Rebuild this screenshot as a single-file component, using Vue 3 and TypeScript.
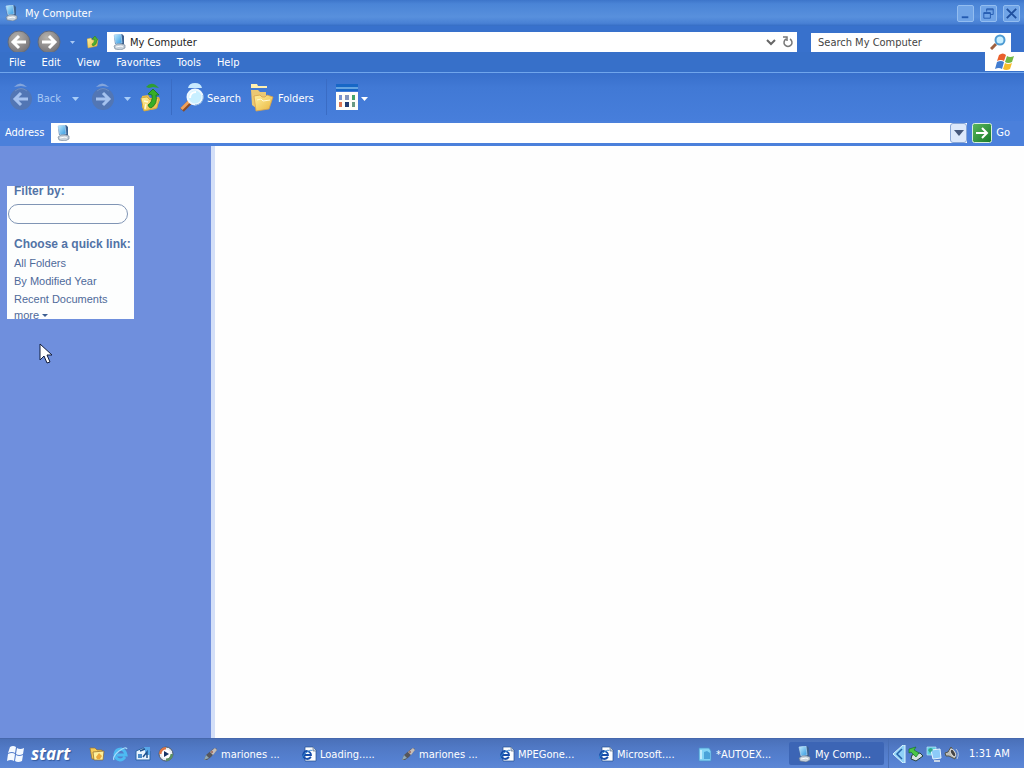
<script setup lang="ts">
import { ref } from 'vue'

interface Task {
  icon: string
  label: string
  active?: boolean
}

const menus: string[] = ['File', 'Edit', 'View', 'Favorites', 'Tools', 'Help']
const quickLinks: string[] = ['All Folders', 'By Modified Year', 'Recent Documents']
const launchers: { icon: string; label: string }[] = [
  { icon: 'i-folder', label: 'Folders' },
  { icon: 'i-ie', label: 'Internet Explorer' },
  { icon: 'i-mail', label: 'Mail' },
  { icon: 'i-media', label: 'Media player' },
]
const tasks: Task[] = [
  { icon: 'i-brush', label: 'mariones ...' },
  { icon: 'i-page', label: 'Loading.....' },
  { icon: 'i-brush', label: 'mariones ...' },
  { icon: 'i-page', label: 'MPEGone...' },
  { icon: 'i-page', label: 'Microsoft....' },
  { icon: 'i-note', label: '*AUTOEX...' },
  { icon: 'i-pc', label: 'My Comp...', active: true },
]
const location = ref('My Computer')
const search = ref('')
const address = ref('')
const filter = ref('')
</script>

<template>
  <div class="screen">
    <svg class="defs" aria-hidden="true">
      <defs>
        <linearGradient id="g-screen" x1="0" y1="0" x2="1" y2="1">
          <stop offset="0" stop-color="#c6eeff" /><stop offset="1" stop-color="#2f97e0" />
        </linearGradient>
        <radialGradient id="g-round" cx=".4" cy=".3" r=".7">
          <stop offset="0" stop-color="#b5b2ac" /><stop offset="1" stop-color="#77757a" />
        </radialGradient>
        <linearGradient id="g-go" x1="0" y1="0" x2="1" y2="1">
          <stop offset="0" stop-color="#5cb85c" /><stop offset="1" stop-color="#167a28" />
        </linearGradient>
        <linearGradient id="g-yellow" x1="0" y1="0" x2="1" y2="1">
          <stop offset="0" stop-color="#fff2a0" /><stop offset="1" stop-color="#e9b53c" />
        </linearGradient>
        <symbol id="i-pc" viewBox="0 0 16 16">
          <path d="M3 1l8-1 2 2v8l-3 1-6-1z" fill="#3c6190" />
          <path d="M3 1l7-1 1 9-6 1z" fill="url(#g-screen)" stroke="#b5d9f7" stroke-width=".7" />
          <path d="M3 12l3-2h5l3 1v3l-4 2-6-1z" fill="#c6d0da" stroke="#66788e" stroke-width=".6" />
          <path d="M5 13l5-1 2 1" fill="none" stroke="#fff" />
        </symbol>
        <symbol id="i-round-left" viewBox="0 0 24 24">
          <circle cx="12" cy="12" r="11" fill="url(#g-round)" stroke="#5f6b80" />
          <path d="M19 12H6M12 6l-6 6 6 6" fill="none" stroke="#fff" stroke-width="3" />
        </symbol>
        <symbol id="i-round-right" viewBox="0 0 24 24">
          <circle cx="12" cy="12" r="11" fill="url(#g-round)" stroke="#5f6b80" />
          <path d="M5 12h13M12 6l6 6-6 6" fill="none" stroke="#fff" stroke-width="3" />
        </symbol>
        <symbol id="i-dim-left" viewBox="0 0 24 30">
          <path d="M5 5q6-7 13 0l-6-1z" fill="#83a5dc" />
          <circle cx="12" cy="17" r="11" fill="#5276b4" />
          <path d="M6 9q6-5 12 0" fill="none" stroke="#6a8dc4" />
          <path d="M19 17H7M12 11l-6 6 6 6" fill="none" stroke="#a5c2ef" stroke-width="3" />
        </symbol>
        <symbol id="i-dim-right" viewBox="0 0 24 30">
          <path d="M5 5q6-7 13 0l-6-1z" fill="#83a5dc" />
          <circle cx="12" cy="17" r="11" fill="#5276b4" />
          <path d="M6 9q6-5 12 0" fill="none" stroke="#6a8dc4" />
          <path d="M5 17h12M12 11l6 6-6 6" fill="none" stroke="#a5c2ef" stroke-width="3" />
        </symbol>
        <symbol id="i-up" viewBox="0 0 22 30">
          <path d="M6 5q6-7 13 1l-6-1-4 1z" fill="#2f9e33" />
          <path d="M2 14l6-1 2 3 9-1 1 3-4 9-12 2-2-4z" fill="#e9bd48" />
          <path d="M1 16l6-1 3 3 9-2-2 10-13 3z" fill="url(#g-yellow)" stroke="#cfa135" stroke-width=".8" />
          <path d="M4 19l4 1M5 27l1-5" fill="none" stroke="#fffbd8" stroke-width="1.500" />
          <path d="M8 12l5-5 6 6h-3q2 9-5 13-2 0-3-3 5-3 4-10z" fill="#37ae26" stroke="#16731d" stroke-width=".8" />
        </symbol>
        <symbol id="i-up-small" viewBox="0 0 12 14">
          <path d="M0 4l4-1 1 2 6-1-1 7-9 2z" fill="url(#g-yellow)" stroke="#d0a536" stroke-width=".5" />
          <path d="M5 4l3-3 3 4H10q0 5-4 6-1-1-1-2 3-1 2-5z" fill="#4db02f" stroke="#287d22" stroke-width=".5" />
        </symbol>
        <symbol id="i-search-big" viewBox="0 0 24 30">
          <path d="M8 6q1-5 7-5t7 5z" fill="#c9eaff" />
          <path d="M2 28l8-8" stroke="#884c29" stroke-width="5" />
          <path d="M1.500 27l8-8" stroke="#f0a25a" stroke-width="3" />
          <circle cx="15" cy="15" r="7.500" fill="#c8efff" stroke="#eef8ff" stroke-width="2" />
          <path d="M10 16q0-6 6-6" fill="none" stroke="#fff" stroke-width="2" />
          <path d="M23 13a8 8 0 0 1-8 10" fill="none" stroke="#80aedc" />
        </symbol>
        <symbol id="i-folders-big" viewBox="0 0 24 30">
          <path d="M1 2h6l1 2h9v2H1z" fill="#fff0b0" />
          <path d="M1 8h7l2 2h6v5L6 26l-4-3z" fill="#eac873" />
          <path d="M4 14l6-1 2 2h3l2-2 6 2-4 12-13 2z" fill="url(#g-yellow)" stroke="#d9a14a" stroke-width=".8" />
          <path d="M7 18l4-1 2 2 7-1" fill="none" stroke="#fff8d5" />
        </symbol>
        <symbol id="i-views" viewBox="0 0 22 26">
          <path d="M0 0h22v7H0z" fill="#1767c6" /><path d="M0 4h22" stroke="#b5e2fb" />
          <path d="M0 8h22v18H0z" fill="#fffef8" />
          <path d="M3 11h3v5H3z" fill="#7793d0" /><path d="M9 11h4v5H9z" fill="#8295bd" /><path d="M16 11h3v5h-3z" fill="#43a56b" />
          <path d="M3 18h3v5H3z" fill="#dd7652" /><path d="M9 18h4v5H9z" fill="#233d70" /><path d="M16 18h3v5h-3z" fill="#6b9b83" />
        </symbol>
        <symbol id="i-glass" viewBox="0 0 16 16">
          <path d="M1 15l5-5" stroke="#9d5f3f" stroke-width="3" />
          <circle cx="10" cy="6" r="4.500" fill="#c8efff" stroke="#4e9bd3" stroke-width="2" />
        </symbol>
        <symbol id="i-flag" viewBox="0 0 20 18">
          <path d="M4 2q4-3 7 0L9 8Q6 6 2 8z" fill="#e9602c" />
          <path d="M12 3q3 2 7 0l-2 6q-4 2-7 0z" fill="#74b843" />
          <path d="M2 9q4-2 7 0l-2 7q-3-2-7 0z" fill="#427dd0" />
          <path d="M10 10q3 2 7 0l-2 6q-4 2-7 0z" fill="#f6bd2c" />
        </symbol>
        <symbol id="i-flag-white" viewBox="0 0 18 18">
          <path d="M3 2q3-2 6 0L8 8Q5 6 1 8zM10 3q3 2 7 0l-1 6q-4 2-7 0zM1 9q4-2 7 0l-1 7q-3-2-7 0zM9 10q3 2 7 0l-1 6q-4 2-7 0z" fill="#f4f9ff" />
        </symbol>
        <symbol id="i-go" viewBox="0 0 20 20">
          <rect x=".5" y=".5" width="19" height="19" rx="2" fill="url(#g-go)" stroke="#d9f0dd" />
          <path d="M4 10h11M10 5l5 5-5 5" fill="none" stroke="#fff" stroke-width="2" />
        </symbol>
        <symbol id="i-folder" viewBox="0 0 16 16">
          <path d="M1 2h5l2 2h5v9H3z" fill="#f7cc59" stroke="#99722e" stroke-width=".7" />
          <path d="M4 6l11-1-1 9H5z" fill="#fff09a" stroke="#8c6726" stroke-width=".7" />
          <path d="M7 11l3-4 3 3-2 3H8z" fill="#eba93c" />
        </symbol>
        <symbol id="i-ie" viewBox="0 0 16 16">
          <path d="M13 11q-2 3-5 3-5-1-5-6 1-5 6-5 4 1 5 6H5" fill="none" stroke="#4dbaf2" stroke-width="3" />
          <path d="M2 14q-2-3 5-9 7-5 8-2" fill="none" stroke="#a5ddfc" stroke-width="1.200" />
        </symbol>
        <symbol id="i-mail" viewBox="0 0 16 16">
          <path d="M1 5l7-3 7 3v9H1z" fill="#e8f4ff" stroke="#2c65a5" />
          <path d="M3 8h4v4H3z" fill="#4b8bc8" />
          <path d="M9 1h6v8h-4z" fill="#57a7e8" /><path d="M5 5l5-2M8 11l4-5v6" fill="none" stroke="#21548f" stroke-width="1.500" />
        </symbol>
        <symbol id="i-media" viewBox="0 0 16 16">
          <circle cx="8" cy="8" r="7" fill="#e8edf2" stroke="#4b5868" />
          <path d="M8 1a7 7 0 0 0-7 7h4a4 4 0 0 1 3-4z" fill="#dc7546" />
          <path d="M8 15a7 7 0 0 0 7-7h-3a4 4 0 0 1-4 4z" fill="#5a8f62" />
          <circle cx="8" cy="8" r="4.500" fill="#fff" /><path d="M6 5l5 3-5 3z" fill="#173464" />
        </symbol>
        <symbol id="i-brush" viewBox="0 0 16 16">
          <path d="M2 14l2-5 7-6 3-1 1 2-6 7-4 3z" fill="#55565c" />
          <path d="M8 6l3 3 4-5-2-2z" fill="#c5bdb8" />
          <path d="M2 14l2-5 3 3z" fill="#8fa8b4" /><circle cx="10" cy="6" r="1" fill="#9b635a" />
        </symbol>
        <symbol id="i-page" viewBox="0 0 16 16">
          <path d="M4 1h8l3 3v11H4z" fill="#fbfdff" stroke="#234e91" stroke-width=".7" />
          <path d="M12 1v4h3" fill="#c1cfdd" stroke="#50617e" stroke-width=".6" />
          <path d="M10 11q-2 2-4 2-4-1-4-4 1-4 4-4 4 1 4 4H3" fill="none" stroke="#174daa" stroke-width="1.800" />
          <path d="M1 13q0-4 5-7 5-3 5-1" fill="none" stroke="#3686d1" />
        </symbol>
        <symbol id="i-note" viewBox="0 0 16 16">
          <path d="M2 2h10l2 3v10H2z" fill="#83d4f5" stroke="#4a91ca" stroke-width=".8" />
          <path d="M7 6l3-1 3 2v6H7z" fill="#4aa3d9" /><path d="M4 4v9" stroke="#d4f4ff" stroke-width="1.500" />
        </symbol>
        <symbol id="i-chev" viewBox="0 0 14 18">
          <path d="M13 0v18h-2L1 9 11 0z" fill="#8fd1f7" stroke="#dcf7ff" />
          <path d="M10 4L5 9l5 5" fill="none" stroke="#2662a9" stroke-width="1.500" />
        </symbol>
        <symbol id="i-safe" viewBox="0 0 16 16">
          <path d="M4 9l8-2 3 3-7 5-5-2z" fill="#d6e3e0" stroke="#26433f" />
          <path d="M1 3l7-2-2 3 5 3-3 4-5-5-2 1z" fill="#4bc546" stroke="#19732b" stroke-width=".7" />
        </symbol>
        <symbol id="i-net" viewBox="0 0 16 16">
          <path d="M1 1h9v8H1z" fill="#5fcfe2" stroke="#c2e2f5" stroke-width=".7" />
          <path d="M5 4l9-1 1 9-8 1z" fill="#8ccaf8" stroke="#e4f4ff" />
          <path d="M8 15h6" stroke="#c7d5e7" stroke-width="2" /><path d="M2 4q3-4 5 0l-3 3z" fill="#35a68c" />
        </symbol>
        <symbol id="i-sound" viewBox="0 0 16 16">
          <path d="M1 7l3-1 3-5 5 7-1 5-6-3H2z" fill="#bcbdb8" stroke="#53564f" />
          <ellipse cx="9" cy="7" rx="2" ry="4" transform="rotate(-30 9 7)" fill="#444" stroke="#ddd" />
          <path d="M12 3q4 4 1 10" fill="none" stroke="#b5c8e0" />
        </symbol>
      </defs>
    </svg>

    <header class="titlebar">
      <svg class="s16"><use href="#i-pc" /></svg>
      <h1>My Computer</h1>
      <div class="winbtns">
        <button aria-label="Minimize"><svg viewBox="0 0 16 16"><path d="M4 11h7v2H4z" fill="#245bb0" /></svg></button>
        <button aria-label="Restore"><svg viewBox="0 0 16 16"><path d="M6 6V3h7v6h-3M3 7h7v6H3zM3 8h7M6 4h7" fill="none" stroke="#245bb0" /></svg></button>
        <button aria-label="Close"><svg viewBox="0 0 16 16"><path d="M3 3l10 10M13 3L3 13" fill="none" stroke="#1f4f9e" stroke-width="2" /></svg></button>
      </div>
    </header>

    <div class="navrow">
      <button aria-label="Previous"><svg class="s24"><use href="#i-round-left" /></svg></button>
      <button class="next" aria-label="Next"><svg class="s24"><use href="#i-round-right" /></svg></button>
      <button class="dot" aria-label="History"><svg viewBox="0 0 5 3"><path d="M0 0h5L2.500 3z" fill="#a9c9f4" /></svg></button>
      <button class="mini" aria-label="Parent folder"><svg><use href="#i-up-small" /></svg></button>
      <div class="field location">
        <svg class="s16"><use href="#i-pc" /></svg>
        <input v-model="location" type="text" aria-label="Location" />
        <button aria-label="Show locations"><svg class="s12" viewBox="0 0 12 12"><path d="M2 4l4 4 4-4" fill="none" stroke="#666" stroke-width="2" /></svg></button>
        <button class="reload" aria-label="Refresh"><svg class="s12" viewBox="0 0 12 12"><path d="M8 3a4 4 0 1 1-4 0M1 1h4v4" fill="none" stroke="#777" stroke-width="1.500" /></svg></button>
      </div>
      <div class="field searchbox">
        <input v-model="search" type="text" placeholder="Search My Computer" aria-label="Search My Computer" />
        <button aria-label="Search"><svg class="s16"><use href="#i-glass" /></svg></button>
      </div>
    </div>

    <nav class="menubar">
      <button v-for="m in menus" :key="m">{{ m }}</button>
      <span class="brand"><svg><use href="#i-flag" /></svg></span>
    </nav>

    <div class="toolbar">
      <button class="dim"><svg class="big"><use href="#i-dim-left" /></svg><span>Back</span></button>
      <button class="drop wide" aria-label="Back history"><svg viewBox="0 0 7 4"><path d="M0 0h7L3.500 4z" fill="#a8cdf8" /></svg></button>
      <button class="dim" aria-label="Forward"><svg class="big"><use href="#i-dim-right" /></svg></button>
      <button class="drop" aria-label="Forward history"><svg viewBox="0 0 7 4"><path d="M0 0h7L3.500 4z" fill="#a8cdf8" /></svg></button>
      <button aria-label="Up"><svg class="big"><use href="#i-up" /></svg></button>
      <span class="sep"></span>
      <button class="find"><svg class="big"><use href="#i-search-big" /></svg><span>Search</span></button>
      <button class="folders"><svg class="big"><use href="#i-folders-big" /></svg><span>Folders</span></button>
      <span class="sep last"></span>
      <button class="views" aria-label="Views"><svg class="grid"><use href="#i-views" /></svg><svg class="tri" viewBox="0 0 7 4"><path d="M0 0h7L3.500 4z" fill="#fff" /></svg></button>
    </div>

    <div class="addressbar">
      <label for="addr">Address</label>
      <div class="field addr">
        <svg class="s16"><use href="#i-pc" /></svg>
        <input id="addr" v-model="address" type="text" />
        <button class="combo" aria-label="Show addresses"><svg viewBox="0 0 10 6"><path d="M0 0h10L5 6z" fill="#46587c" /></svg></button>
      </div>
      <button class="go"><svg><use href="#i-go" /></svg>Go</button>
    </div>

    <div class="body">
      <aside class="side">
        <section class="panel">
          <label for="filter">Filter by:</label>
          <input id="filter" v-model="filter" type="text" />
          <h2>Choose a quick link:</h2>
          <a v-for="q in quickLinks" :key="q" href="#">{{ q }}</a>
          <a class="more" href="#">more <svg viewBox="0 0 6 3"><path d="M0 0h6L3 3z" fill="#3d5f92" /></svg></a>
        </section>
      </aside>
      <main class="content"></main>
    </div>

    <footer class="taskbar">
      <button class="start"><svg><use href="#i-flag-white" /></svg>start</button>
      <div class="launch">
        <button v-for="l in launchers" :key="l.label" :aria-label="l.label"><svg class="s16"><use :href="'#' + l.icon" /></svg></button>
      </div>
      <div class="tasks">
        <button v-for="(t, i) in tasks" :key="i" :class="{ active: t.active }">
          <svg class="s16"><use :href="'#' + t.icon" /></svg><span>{{ t.label }}</span>
        </button>
      </div>
      <div class="tray">
        <svg class="chev"><use href="#i-chev" /></svg>
        <svg class="s16"><use href="#i-safe" /></svg>
        <svg class="s16"><use href="#i-net" /></svg>
        <svg class="s16"><use href="#i-sound" /></svg>
        <time>1:31 AM</time>
      </div>
    </footer>

    <svg class="cursor" viewBox="0 0 13 21"><path d="M1 1v16l4-4 3 7 3-1-3-7h5z" fill="#fff" stroke="#111c3c" /></svg>
  </div>
</template>

<style>
body {
  margin: 0;
}
</style>

<style scoped>
.screen {
  position: relative;
  display: flex;
  flex-direction: column;
  height: 100vh;
  overflow: hidden;
  background: #3a73ce;
  color: #fff;
  font: 11px/14px Tahoma, "DejaVu Sans Condensed", "DejaVu Sans", sans-serif;
}
.defs {
  position: absolute;
  width: 0;
  height: 0;
}
svg {
  display: block;
  flex: none;
}
button {
  display: flex;
  align-items: center;
  padding: 0;
  border: 0;
  background: none;
  color: inherit;
  font: inherit;
}
input {
  box-sizing: border-box;
  min-width: 0;
  padding: 2px 0 0;
  border: 0;
  outline: 0;
  background: none;
  color: #222;
  font: inherit;
}
.s12 { width: 12px; height: 12px; }
.s16 { width: 16px; height: 16px; }
.s24 { width: 24px; height: 24px; }
.titlebar {
  display: flex;
  align-items: center;
  height: 26px;
  padding: 0 4px 0 3px;
  background: linear-gradient(#3d75ca 0, #4a84d6 15%, #5890dd 65%, #4880d4 90%, #346cc4);
}
.titlebar h1 {
  margin: 0 auto 0 6px;
  padding-top: 2px;
  font-size: 11px;
  font-weight: 400;
}
.winbtns {
  display: flex;
  gap: 6px;
}
.winbtns button {
  box-sizing: border-box;
  width: 17px;
  height: 17px;
  border: 1px solid #93bdf0;
  border-radius: 2px;
  background: #70a4e7;
}
.winbtns svg {
  width: 15px;
  height: 15px;
}
.navrow {
  display: flex;
  align-items: center;
  height: 20px;
  padding: 6px 13px 0 7px;
  background: #3871cc;
}
.next { margin-left: 6px; }
.dot { margin: 0 12px 0 9px; }
.dot svg { width: 5px; height: 3px; }
.mini svg { width: 12px; height: 14px; }
.field {
  display: flex;
  align-items: center;
  height: 20px;
  background: #fff;
}
.field input { flex: 1; }
.location {
  flex: 1;
  gap: 3px;
  margin-left: 8px;
  padding: 0 3px 0 4px;
}
.location .reload { margin-left: 2px; }
.searchbox {
  box-sizing: border-box;
  width: 200px;
  height: 19px;
  margin-left: 14px;
  padding: 0 5px 0 7px;
}
.searchbox input::placeholder {
  color: #444;
  opacity: 1;
}
.menubar {
  display: flex;
  align-items: center;
  gap: 16px;
  height: 20px;
  padding-left: 9px;
  background: #3770c9;
}
.menubar button { padding-top: 2px; }
.brand {
  display: flex;
  align-items: center;
  justify-content: center;
  width: 39px;
  height: 19px;
  margin-left: auto;
  align-self: flex-start;
  background: #fff;
}
.brand svg { width: 20px; height: 18px; }
.toolbar {
  display: flex;
  align-items: center;
  height: 48px;
  padding: 0 9px;
  border-top: 1px solid #70a5ec;
  background: linear-gradient(#386fcb, #4179d5 30%, #477edb);
}
.toolbar button { gap: 4px; }
.toolbar button span { padding-top: 4px; }
.big { width: 24px; height: 30px; }
.dim { color: #a9c9f5; }
.drop { margin: 0 8px 0 9px; }
.toolbar .wide { margin: 0 12px 0 11px; }
.drop svg,
.tri { width: 7px; height: 4px; }
.drop svg { margin-top: 4px; }
.tri { margin-top: 4px; }
.sep {
  width: 1px;
  height: 36px;
  margin: 0 8px;
  background: #3a6cc4;
}
.sep.last { margin: 0 9px 0 12px; }
.toolbar .find { gap: 3px; }
.toolbar .folders { margin-left: 9px; }
.grid { width: 22px; height: 26px; }
.toolbar .views { gap: 3px; }
.addressbar {
  display: flex;
  align-items: center;
  height: 24px;
  padding: 0 14px 1px 5px;
  background: #4b80db;
}
.addr {
  flex: 1;
  margin-left: 7px;
  padding-left: 4px;
}
.combo {
  box-sizing: border-box;
  justify-content: center;
  width: 17px;
  height: 20px;
  border: 1px solid #8aa7d6;
  border-radius: 3px;
  background: #dce8fb;
}
.combo svg { width: 10px; height: 6px; }
.go { gap: 4px; margin-left: 5px; }
.go svg { width: 20px; height: 20px; }
.body {
  display: flex;
  flex: 1;
  min-height: 0;
}
.side {
  box-sizing: border-box;
  width: 215px;
  padding: 40px 0 0 7px;
  border-right: 4px solid #d3dff8;
  background: #6f8fdd;
}
.content {
  flex: 1;
  background: #fefefe;
}
.panel {
  box-sizing: border-box;
  display: flex;
  flex-direction: column;
  align-self: flex-start;
  width: 127px;
  padding-left: 7px;
  background: #fdfefe;
  color: #4f6a9a;
  font-family: "Liberation Sans", Arial, sans-serif;
  white-space: nowrap;
}
.panel label {
  color: #5273a6;
  font-size: 12px;
  font-weight: 700;
  line-height: 10px;
}
.panel input {
  width: 120px;
  height: 20px;
  margin: 8px 0 13px -6px;
  padding: 0 8px;
  border: 1px solid #8095b5;
  border-radius: 10px;
  flex: none;
}
.panel h2 {
  margin: 0 0 3px;
  color: #5273a6;
  font-size: 12px;
  font-weight: 700;
}
.panel a {
  color: inherit;
  line-height: 18px;
  text-decoration: none;
}
.panel .more {
  display: flex;
  align-items: center;
  gap: 3px;
  margin-top: 3px;
  line-height: 8px;
}
.more svg { width: 6px; height: 3px; }
.taskbar {
  box-sizing: border-box;
  display: flex;
  align-items: stretch;
  height: 30px;
  border-top: 1px solid #4668ad;
  background: linear-gradient(#4a70b8, #5079c5 30%, #5580d0 70%, #5d87d6);
}
.start {
  gap: 6px;
  width: 89px;
  padding-left: 7px;
  font: italic 700 17px/20px "Noto Sans", sans-serif;
  text-shadow: 1px 1px 1px #34599c;
}
.start svg { width: 18px; height: 18px; }
.launch {
  display: flex;
  gap: 7px;
  width: 106px;
}
.tasks {
  display: grid;
  grid-template-columns: repeat(7, 1fr);
  flex: 1;
  padding: 3px 0;
}
.tasks button {
  gap: 3px;
  margin-right: 4px;
  padding-left: 7px;
  overflow: hidden;
  white-space: nowrap;
}
.tasks span { padding-top: 2px; }
.tasks .active {
  border-radius: 2px;
  background: #3c65b5;
}
.tray {
  box-sizing: border-box;
  display: flex;
  align-items: center;
  gap: 2px;
  width: 136px;
  padding-left: 3px;
  border-left: 1px solid #476eb5;
}
.chev { width: 14px; height: 18px; }
.tray time { margin-left: 7px; white-space: nowrap; }
.cursor {
  position: absolute;
  left: 39px;
  top: 343px;
  width: 13px;
  height: 21px;
}
</style>
